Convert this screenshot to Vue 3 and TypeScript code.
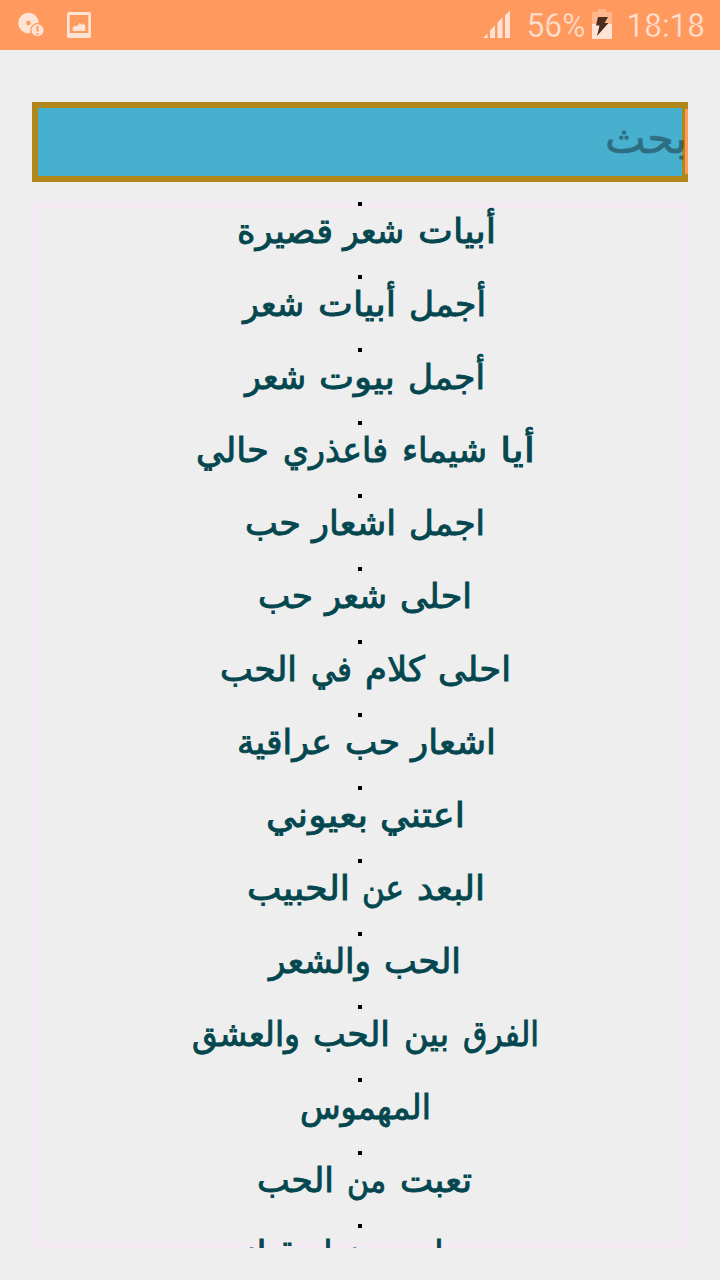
<script setup lang="ts">
// Each word carries its left and right edge on the line.
type Word = [text: string, left: number, right: number]
const rows: Word[][] = [
  [['أبيات', 418, 496], ['شعر', 343, 404], ['قصيرة', 237, 333]],
  [['أجمل', 409, 486], ['أبيات', 318, 396], ['شعر', 243, 304]],
  [['أجمل', 408, 485], ['بيوت', 319, 395], ['شعر', 245, 306]],
  [['أيا', 500, 535], ['شيماء', 402, 487], ['فاعذري', 283, 388], ['حالي', 196, 269]],
  [['اجمل', 409, 485], ['اشعار', 312, 396], ['حب', 245, 301]],
  [['احلى', 400, 472], ['شعر', 325, 387], ['حب', 258, 313]],
  [['احلى', 438, 511], ['كلام', 365, 425], ['في', 311, 352], ['الحب', 220, 297]],
  [['اشعار', 411, 496], ['حب', 345, 400], ['عراقية', 237, 332]],
  [['اعتني', 380, 465], ['بعيوني', 266, 368]],
  [['البعد', 417, 485], ['عن', 362, 404], ['الحبيب', 247, 350]],
  [['الحب', 384, 461], ['والشعر', 269, 371]],
  [['الفرق', 463, 539], ['بين', 404, 449], ['الحب', 313, 390], ['والعشق', 192, 300]],
  [['المهموس', 300, 431]],
  [['تعبت', 400, 472], ['من', 347, 386], ['الحب', 257, 334]],
  [['حوار', 418, 482], ['مع', 371, 405], ['نزار', 308, 359], ['قباني', 216, 296]],
]
</script>

<template>
  <div class="screen">
    <header class="status">
      <svg class="left" width="120" height="50" viewBox="0 0 120 50">
        <circle cx="28.5" cy="23" r="10.3" />
        <circle class="cut" cx="28.5" cy="23" r="2.3" />
        <circle class="cut" cx="37.5" cy="30.3" r="7.3" />
        <circle cx="37.5" cy="30.3" r="6" />
        <path class="cut" d="M36.500 26h2v5.500h-2zM36.500 33h2v2h-2z" />
        <path fill-rule="evenodd" d="M69 12h20q2 0 2 2v22q0 2-2 2H69q-2 0-2-2V14q0-2 2-2zm.7 3v18h18.600V15zM72.700 31v-3.500l2.500-2 1.500 1 3-4 2.300 2.500 1.500-1.500 1.800 2.500V31z" />
      </svg>
      <svg class="right" width="250" height="50" viewBox="470 0 250 50">
        <path d="M483 38l4.500-4.500V38zM490 38V30.500l5-5V38zM497.500 38V22.500l5-5V38zM505 38V15.500l5-5V38z" />
        <text x="526.500" y="37.300" textLength="59" lengthAdjust="spacingAndGlyphs">56%</text>
        <path class="faint" d="M592 12h6V9h8v3h6v12h-20z" />
        <path d="M592 24h20v15h-20z" />
        <path class="bolt" d="M598 17h10l-3.500 6h4L597 36l2.500-10.500H596z" />
        <text x="626.500" y="37.300" textLength="78.500" lengthAdjust="spacingAndGlyphs">18:18</text>
      </svg>
    </header>
    <div class="search">
      <i class="edge"></i>
      <svg width="650" height="68" viewBox="38 108 650 68">
        <text x="605" y="153" textLength="82" lengthAdjust="spacingAndGlyphs">بحث</text>
      </svg>
    </div>
    <main class="list">
      <div v-for="(row, i) in rows" :key="i" class="row">
        <i class="dot"></i>
        <svg width="656" height="69" viewBox="32 4 656 69">
          <text v-for="[text, left, right] in row" :key="left" :x="left" y="41" :textLength="right - left" lengthAdjust="spacingAndGlyphs">{{ text }}</text>
        </svg>
      </div>
    </main>
  </div>
</template>

<style>
html, body { margin: 0; background: #eee; }
</style>
<style scoped>
.screen { width: 720px; height: 1280px; background: #eee; overflow: hidden; display: flex; flex-direction: column; }
.status { height: 50px; flex: none; background: #ff995e; display: flex; justify-content: space-between; }
.status svg { fill: #ffe3d5; font: 400 33.5px Roboto, sans-serif; }
.status text { stroke: #ff995e; stroke-width: .4px; }
.status .cut { fill: #ff995e; }
.status .faint { fill: #ffb68d; }
.status .bolt { fill: #4a2c20; }
.search { position: relative; box-sizing: border-box; flex: none; margin: 52px 32px 20px; height: 80px; background: #48b0cf; border: 6px solid #b08819; }
.search svg { position: relative; display: block; }
.search text { font: 400 42px "DejaVu Sans", sans-serif; fill: #000; stroke: #000; stroke-width: .7px; opacity: .37; }
.edge { position: absolute; right: -6px; top: 1px; width: 3px; height: 65px; background: #ff995e; }
.list { position: relative; box-sizing: border-box; margin: 0 32px; height: 1046px; flex: none; overflow: hidden; background: linear-gradient(#eee, #eee) center / 644px 1034px no-repeat #f4eaf3; }
.row { height: 73px; display: flex; flex-direction: column; align-items: center; }
.dot { width: 4px; height: 4px; flex: none; background: #000; }
.row svg { display: block; overflow: visible; }
.row text { font: 400 34.5px "DejaVu Sans", sans-serif; fill: #04474f; stroke: #04474f; stroke-width: .9px; }
</style>
